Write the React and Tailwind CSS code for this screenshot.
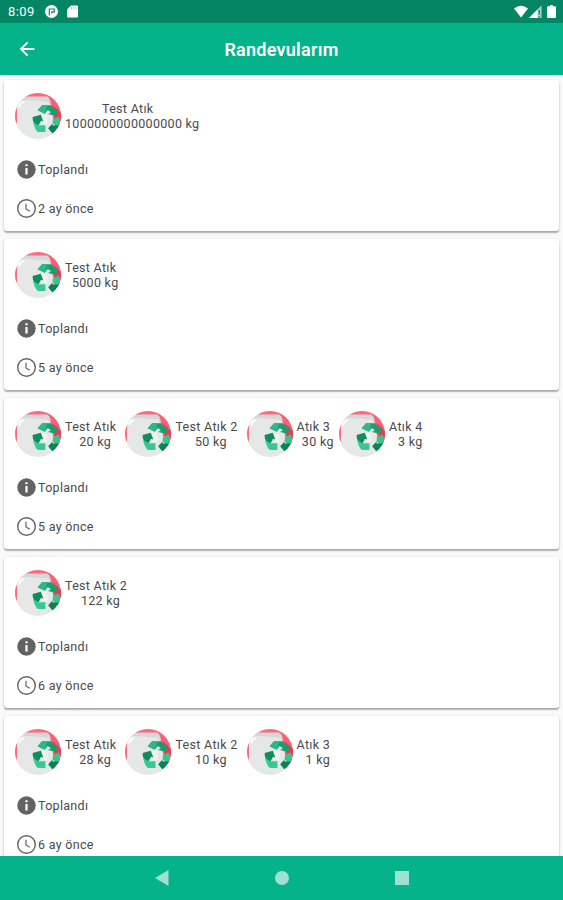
import React from 'react';
import { MdArrowBack } from 'react-icons/md';

const appointments = [
  { id: 1, status: 'Toplandı', time: '2 ay önce', items: [{ name: 'Test Atık', amount: '1000000000000000 kg' }] },
  { id: 2, status: 'Toplandı', time: '5 ay önce', items: [{ name: 'Test Atık', amount: '5000 kg' }] },
  {
    id: 3,
    status: 'Toplandı',
    time: '5 ay önce',
    items: [
      { name: 'Test Atık', amount: '20 kg' },
      { name: 'Test Atık 2', amount: '50 kg' },
      { name: 'Atık 3', amount: '30 kg' },
      { name: 'Atık 4', amount: '3 kg' },
    ],
  },
  { id: 4, status: 'Toplandı', time: '6 ay önce', items: [{ name: 'Test Atık 2', amount: '122 kg' }] },
  {
    id: 5,
    status: 'Toplandı',
    time: '6 ay önce',
    items: [
      { name: 'Test Atık', amount: '28 kg' },
      { name: 'Test Atık 2', amount: '10 kg' },
      { name: 'Atık 3', amount: '1 kg' },
    ],
  },
];

function WasteImage() {
  return (
    <svg viewBox="0 0 136 136" className="w-[46px] h-[46px] rounded-full shrink-0">
      <rect width="136" height="136" fill="#e6e7e7" />
      <path d="M30 0H106V14H34Z" fill="#fb6a7d" />
      <path d="M0 46L6 44V90H0Z" fill="#fb6a7d" />
      <path d="M92 8L136 20V104H118L110 60Z" fill="#fb6175" />
      <path d="M112 36L136 60V104H122Z" fill="#f0394f" />
      <path d="M6 44Q12 10 38 10H94Q102 12 105 26L108 44Z" fill="#d6d8d8" />
      <path d="M6 48Q8 21 28 21L98 25L106 46L118 128H6Z" fill="#e6e7e7" />
      <path d="M13 40Q14 29 24 27" fill="none" stroke="#fff" strokeWidth="6" strokeLinecap="round" />
      {/* recycle arrows */}
      <path d="M80 36H107L118 49L127 46L121 68L98 62L106 57L97 50L88 61L67 51Z" fill="#17a06f" />
      <path d="M80 36H96L88 61L67 51Z" fill="#2db987" />
      <path d="M52 71L76 64L84 84L77 82L69 97L60 93L53 82Z" fill="#0e8e5e" />
      <path d="M53 85L69 95H90V115H68Q60 112 53 85Z" fill="#38c992" />
      <path d="M112 78L129 69L136 86L127 100L111 90Z" fill="#36c58f" />
      <path d="M98 104L111 90V96H130L119 113L110 119Z" fill="#0c8355" />
      <path d="M90 62L96 70L97 88L93 94L78 90L84 84L80 68Z" fill="#f0f1f1" />
    </svg>
  );
}

function InfoIcon() {
  return (
    <svg viewBox="0 0 19 19" className="h-[19px] w-[19px] shrink-0">
      <circle cx="9.5" cy="9.5" r="9.2" fill="#626262" />
      <path d="M9.5 4.2V6.3M9.5 8V14.4" stroke="#fff" strokeWidth="2.2" />
    </svg>
  );
}

function ClockIcon() {
  return (
    <svg viewBox="0 0 19 19" className="h-[19px] w-[19px] shrink-0" fill="none" stroke="#626262">
      <circle cx="9.5" cy="9.5" r="8.8" strokeWidth="1.4" />
      <path d="M9 4.8V10L12.8 12.3" strokeWidth="1.2" />
    </svg>
  );
}

function WasteItem({ item }) {
  return (
    <div className="flex items-center gap-1">
      <WasteImage />
      <div className="text-center leading-[15px]">
        <p className="pr-[9px]">{item.name}</p>
        <p>{item.amount}</p>
      </div>
    </div>
  );
}

function AppointmentCard({ appointment }) {
  return (
    <div className="h-[151px] shrink-0 rounded-[3px] bg-white pl-[11px] pt-[13px] shadow-[0_1px_3px_rgba(0,0,0,0.22),0_1.5px_1px_rgba(0,0,0,0.2)]">
      <div className="flex h-[46px]">
        {appointment.items.map((item) => (
          <WasteItem key={item.name} item={item} />
        ))}
      </div>
      <div className="mt-[21px] flex h-[19px] items-center gap-[2px] pl-[2px]">
        <InfoIcon />
        <span className="leading-[19px]">{appointment.status}</span>
      </div>
      <div className="mt-5 flex h-[19px] items-center gap-[2px] pl-[2px]">
        <ClockIcon />
        <span className="leading-[19px]">{appointment.time}</span>
      </div>
    </div>
  );
}

function StatusBar() {
  return (
    <div className="flex h-[23px] shrink-0 items-center justify-between bg-[#048664] pl-2 pr-[7px] text-white">
      <div className="flex items-center">
        <span className="w-[37px] text-[13px] tracking-[0.4px]">8:09</span>
        <svg viewBox="0 0 13 13" className="w-[13px] h-[13px]">
          <circle cx="6.5" cy="6.5" r="6.5" fill="#fff" />
          <path d="M4.3 10.5V4H9.3V6.8H6.8V8.6" fill="none" stroke="#048664" strokeWidth="1.2" />
        </svg>
        <svg viewBox="0 0 11 13" className="ml-[9px] w-[11px] h-[13px]">
          <path d="M4 .5H10Q11 .5 11 1.5V11.5Q11 12.5 10 12.5H1Q0 12.5 0 11.5V4.5Z" fill="#fff" />
          <path d="M4.5 2V4.5M6.7 2V4.5M8.9 2V4.5" stroke="#8cc8b7" strokeWidth=".8" />
        </svg>
      </div>
      <div className="flex items-center">
        <svg viewBox="0 0 14 13" className="w-[14px] h-[13px]">
          <path d="M0 3.5Q7-2 14 3.5L7 12.5Z" fill="#fff" />
        </svg>
        <svg viewBox="0 0 13 13" className="ml-px w-[13px] h-[13px]">
          <path d="M0 13L12.5.5V13Z" fill="#a8d5c8" />
          <path d="M0 13L8.5 4.5V13Z" fill="#fff" />
          <path d="M10.2 5V9.5M10.2 11V12.5" stroke="#048664" strokeWidth="1.3" />
        </svg>
        <svg viewBox="0 0 9 13" className="ml-[5px] w-[9px] h-[13px]">
          <path d="M3 0H6V1.3H8Q9 1.3 9 2.3V12Q9 13 8 13H1Q0 13 0 12V2.3Q0 1.3 1 1.3H3Z" fill="#fff" />
        </svg>
      </div>
    </div>
  );
}

export default function App() {
  return (
    <div className="flex h-[900px] w-full flex-col overflow-hidden bg-[#fafafa] font-['Roboto',sans-serif] text-[12.5px] tracking-[0.3px] text-[#4a4a4a]">
      <StatusBar />
      <header className="grid h-[52px] shrink-0 grid-cols-[1fr_auto_1fr] items-center bg-[#04b38a] px-4 text-white">
        <button className="w-fit">
          <MdArrowBack size={22} />
        </button>
        <h1 className="text-[18px] font-semibold tracking-[0.25px]">Randevularım</h1>
      </header>

      <main className="flex min-h-0 flex-1 flex-col gap-2 overflow-hidden px-1 pt-[5px]">
        {appointments.map((appointment) => (
          <AppointmentCard key={appointment.id} appointment={appointment} />
        ))}
      </main>

      {/* Android navigation bar */}
      <nav className="flex h-11 shrink-0 items-center justify-center gap-[106px] bg-[#04b38a]">
        <svg viewBox="0 0 14 16" className="w-[14px] h-4">
          <path d="M0 8L13.5 0V16Z" fill="#9fe0ce" />
        </svg>
        <span className="h-[14px] w-[14px] rounded-full bg-[#9fe0ce]" />
        <span className="h-[14px] w-[14px] bg-[#9fe0ce]" />
      </nav>
    </div>
  );
}
